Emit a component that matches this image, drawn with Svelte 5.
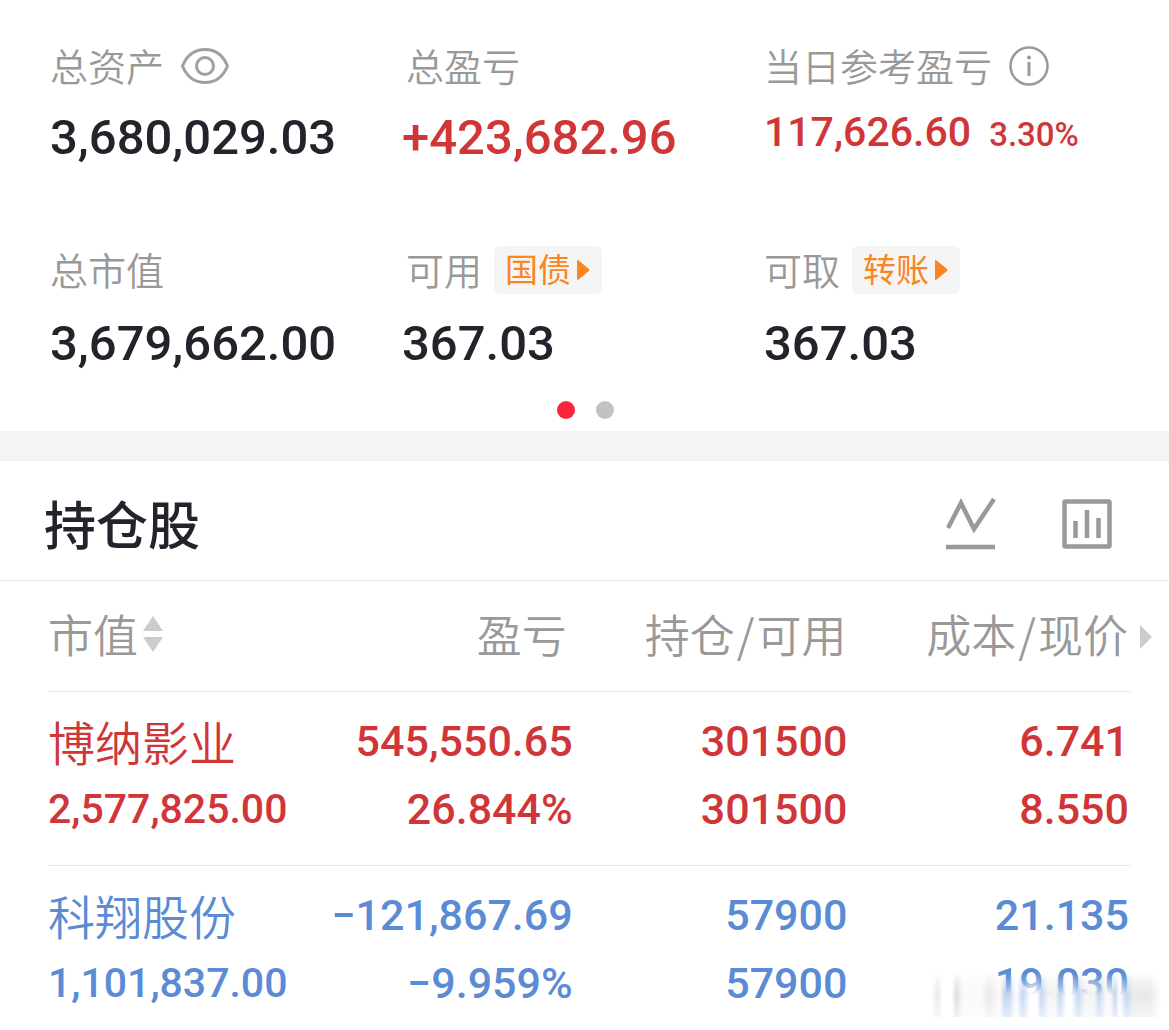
<script lang="ts">
    type Holding = {
        name: string;
        marketValue: string;
        profit: string;
        profitRate: string;
        position: string;
        available: string;
        cost: string;
        price: string;
        rising: boolean;
    };

    const holdings: Holding[] = [
        {
            name: '博纳影业',
            marketValue: '2,577,825.00',
            profit: '545,550.65',
            profitRate: '26.844%',
            position: '301500',
            available: '301500',
            cost: '6.741',
            price: '8.550',
            rising: true
        },
        {
            name: '科翔股份',
            marketValue: '1,101,837.00',
            profit: '−121,867.69',
            profitRate: '−9.959%',
            position: '57900',
            available: '57900',
            cost: '21.135',
            price: '19.030',
            rising: false
        }
    ];
</script>

<main>
    <section class="summary">
        <div class="grid">
            <div class="item">
                <div class="label">
                    <span>总资产</span>
                    <button class="icon-button" aria-label="隐藏资产">
                        <svg width="50" height="38" viewBox="0 0 50 38" fill="none" stroke="#a0a0a0" stroke-width="3">
                            <path d="M2.500 19C7 8 15 2.500 25 2.500S43 8 47.500 19C43 30 35 35.500 25 35.500S7 30 2.500 19Z" />
                            <circle cx="25" cy="19" r="8.500" />
                        </svg>
                    </button>
                </div>
                <div class="value">3,680,029.03</div>
            </div>
            <div class="item middle">
                <div class="label"><span>总盈亏</span></div>
                <div class="value up">+423,682.96</div>
            </div>
            <div class="item">
                <div class="label">
                    <span>当日参考盈亏</span>
                    <button class="icon-button" aria-label="说明">
                        <svg width="42" height="42" viewBox="0 0 42 42" fill="none" stroke="#999" stroke-width="2.500">
                            <circle cx="21" cy="21" r="18.500" />
                            <path d="M21 17V31" stroke-width="3" />
                            <circle cx="21" cy="12.500" r="2" fill="#999" stroke="none" />
                        </svg>
                    </button>
                </div>
                <div class="value today up">117,626.60 <small>3.30%</small></div>
            </div>
            <div class="item lower">
                <div class="label"><span>总市值</span></div>
                <div class="value">3,679,662.00</div>
            </div>
            <div class="item middle lower">
                <div class="label">
                    <span>可用</span>
                    <button class="tag">
                        <span>国债</span>
                        <svg width="14" height="20" viewBox="0 0 14 20"><path d="M1 1Q1 0 2 0L13 9Q14 10 13 11L2 20Q1 20 1 19Z" fill="#fb8423" /></svg>
                    </button>
                </div>
                <div class="value">367.03</div>
            </div>
            <div class="item lower">
                <div class="label">
                    <span>可取</span>
                    <button class="tag">
                        <span>转账</span>
                        <svg width="14" height="20" viewBox="0 0 14 20"><path d="M1 1Q1 0 2 0L13 9Q14 10 13 11L2 20Q1 20 1 19Z" fill="#fb8423" /></svg>
                    </button>
                </div>
                <div class="value">367.03</div>
            </div>
        </div>
        <div class="dots">
            <span class="dot active"></span>
            <span class="dot"></span>
        </div>
    </section>

    <section class="holdings">
        <header>
            <h2>持仓股</h2>
            <div class="tools">
                <button class="icon-button" aria-label="走势">
                    <svg width="50" height="52" viewBox="0 0 50 52" fill="none" stroke="#999" stroke-width="4.500">
                        <path d="M2 30L15 5L28 31L48 1" />
                        <path d="M0 49H49" />
                    </svg>
                </button>
                <button class="icon-button" aria-label="分析">
                    <svg width="50" height="50" viewBox="0 0 50 50" fill="none" stroke="#999" stroke-width="4.500">
                        <rect x="2.500" y="2.500" width="45" height="45" rx="1" />
                        <path d="M13.500 22V39M25 11V39M36.500 19V39" />
                    </svg>
                </button>
            </div>
        </header>

        <div class="table-wrapper">
            <table>
                <thead>
                    <tr>
                        <th>
                            <button class="sort">
                                市值
                                <svg width="20" height="36" viewBox="0 0 20 36" fill="#ccc"><path d="M10 0L20 15H0ZM0 21H20L10 36Z" /></svg>
                            </button>
                        </th>
                        <th>盈亏</th>
                        <th>持仓<i>/</i>可用</th>
                        <th>成本<i>/</i>现价</th>
                    </tr>
                </thead>
                <tbody>
                    {#each holdings as item}
                        <tr class={item.rising ? 'up' : 'down'}>
                            <td>
                                <div class="name">{item.name}</div>
                                <div class="market">{item.marketValue}</div>
                            </td>
                            <td>
                                <div>{item.profit}</div>
                                <div>{item.profitRate}</div>
                            </td>
                            <td>
                                <div>{item.position}</div>
                                <div>{item.available}</div>
                            </td>
                            <td>
                                <div>{item.cost}</div>
                                <div>{item.price}</div>
                            </td>
                        </tr>
                    {/each}
                </tbody>
            </table>
            <svg class="more" width="12" height="24" viewBox="0 0 12 24"><path d="M0 0L12 12L0 24Z" fill="#ccc" /></svg>
            <div class="smudge"></div>
        </div>
    </section>
</main>

<style>
    :global(body) {
        background-color: #fff;
    }

    main {
        font-family: Roboto, 'Noto Sans CJK SC', sans-serif;
        color: #22242c;
        overflow: hidden;
    }

    button {
        border: 0;
        padding: 0;
        background: none;
        font: inherit;
        color: inherit;
        cursor: pointer;
    }

    svg {
        display: block;
    }

    .summary {
        padding: 42px 0 12px 50px;
        border-bottom: 30px solid #f4f4f4;
    }

    .grid {
        display: grid;
        grid-template-columns: 352fr 362fr 405fr;
        row-gap: 78px;
    }

    .label {
        display: flex;
        align-items: center;
        gap: 12px;
        height: 48px;
        font-family: 'Noto Sans CJK SC', sans-serif;
        font-size: 38px;
        font-weight: 350;
        color: #999;
        white-space: nowrap;
    }

    .label span {
        padding-bottom: 4px;
    }

    .middle .label {
        padding-left: 4px;
    }

    .label .icon-button {
        margin-left: 4px;
    }

    .value {
        margin-top: 18px;
        line-height: 60px;
        font-size: 49px;
        font-weight: 500;
        white-space: nowrap;
    }

    .lower .value {
        margin-top: 20px;
    }

    .value.today {
        font-size: 41px;
        line-height: 48px;
    }

    .value small {
        margin-left: 8px;
        font-size: 33px;
    }

    .up {
        color: #d03638;
    }

    .down {
        color: #5a8bd4;
    }

    .tag {
        display: flex;
        align-items: center;
        gap: 5px;
        height: 48px;
        padding: 0 12px 0 11px;
        border-radius: 6px;
        background-color: #f5f5f5;
        font-size: 33px;
        font-weight: 400;
        color: #fb8423;
    }

    .dots {
        display: flex;
        justify-content: center;
        gap: 21px;
        margin: 27px 48px 0 0;
    }

    .dot {
        width: 18px;
        height: 18px;
        border-radius: 50%;
        background-color: #c2c2c2;
    }

    .dot.active {
        background-color: #fb2639;
    }

    header {
        display: flex;
        align-items: center;
        justify-content: space-between;
        height: 119px;
        padding: 0 57px 0 44px;
        border-bottom: 1px solid #e8e8e8;
    }

    h2 {
        margin: 0;
        padding-top: 4px;
        font-size: 52px;
        font-weight: 500;
    }

    .tools {
        display: flex;
        align-items: center;
        gap: 66px;
        padding-top: 6px;
    }

    .table-wrapper {
        position: relative;
        padding: 0 38px 0 48px;
    }

    table {
        width: 100%;
        table-layout: fixed;
        border-collapse: collapse;
    }

    th {
        height: 110px;
        padding: 0 3px 4px 0;
        box-sizing: border-box;
        border-bottom: 1px solid #e8e8e8;
        font-family: 'Noto Sans CJK SC', sans-serif;
        font-size: 45px;
        font-weight: 350;
        text-align: right;
        color: #999;
        white-space: nowrap;
    }

    th:first-child {
        width: 22%;
        text-align: left;
    }

    th:nth-child(2) {
        width: 27%;
        padding-right: 12px;
    }

    th:nth-child(3) {
        width: 25%;
    }

    th i {
        padding: 0 2px;
        font-style: normal;
    }

    .sort {
        display: flex;
        align-items: center;
        gap: 5px;
    }

    td {
        padding: 15px 2px 22px 0;
        border-bottom: 1px solid #e8e8e8;
        font-size: 43px;
        font-weight: 500;
        line-height: 68px;
        text-align: right;
        vertical-align: top;
        white-space: nowrap;
    }

    td:first-child {
        text-align: left;
    }

    td:nth-child(2) {
        padding-right: 6px;
    }

    tr:last-child td {
        padding-bottom: 12px;
        border-bottom: 0;
    }

    .name {
        padding-top: 4px;
        font-size: 47px;
        font-weight: 350;
    }

    .market {
        font-size: 41px;
        line-height: 60px;
    }

    .more {
        position: absolute;
        top: 44px;
        right: 17px;
    }

    /* faded strip over the bottom right corner */
    .smudge {
        position: absolute;
        right: 8px;
        bottom: 12px;
        width: 230px;
        height: 44px;
        background:
            linear-gradient(to bottom, transparent, rgba(255, 255, 255, 0.7)),
            linear-gradient(to right, transparent, #ddd 3%, #fff 5% 9%, #ccc 11%, #f6f6f6 14% 22%, #ddd 25%, #f4f4f4 29% 30%, #a3bfe8 32% 34%, #fff 37%, #a3bfe8 40%, #fff 43% 46%, #a3bfe8 48%, #eee 51% 54%, #a3bfe8 56%, #fff 59% 61%, #a3bfe8 64%, #eee 67% 71%, #a3bfe8 73%, #f4f4f4 76% 78%, #a3bfe8 80%, #fff 82%, #a3bfe8 85%, #ddd 88% 95%, transparent);
        mask-image: linear-gradient(to bottom, transparent, #000 50%);
    }
</style>
